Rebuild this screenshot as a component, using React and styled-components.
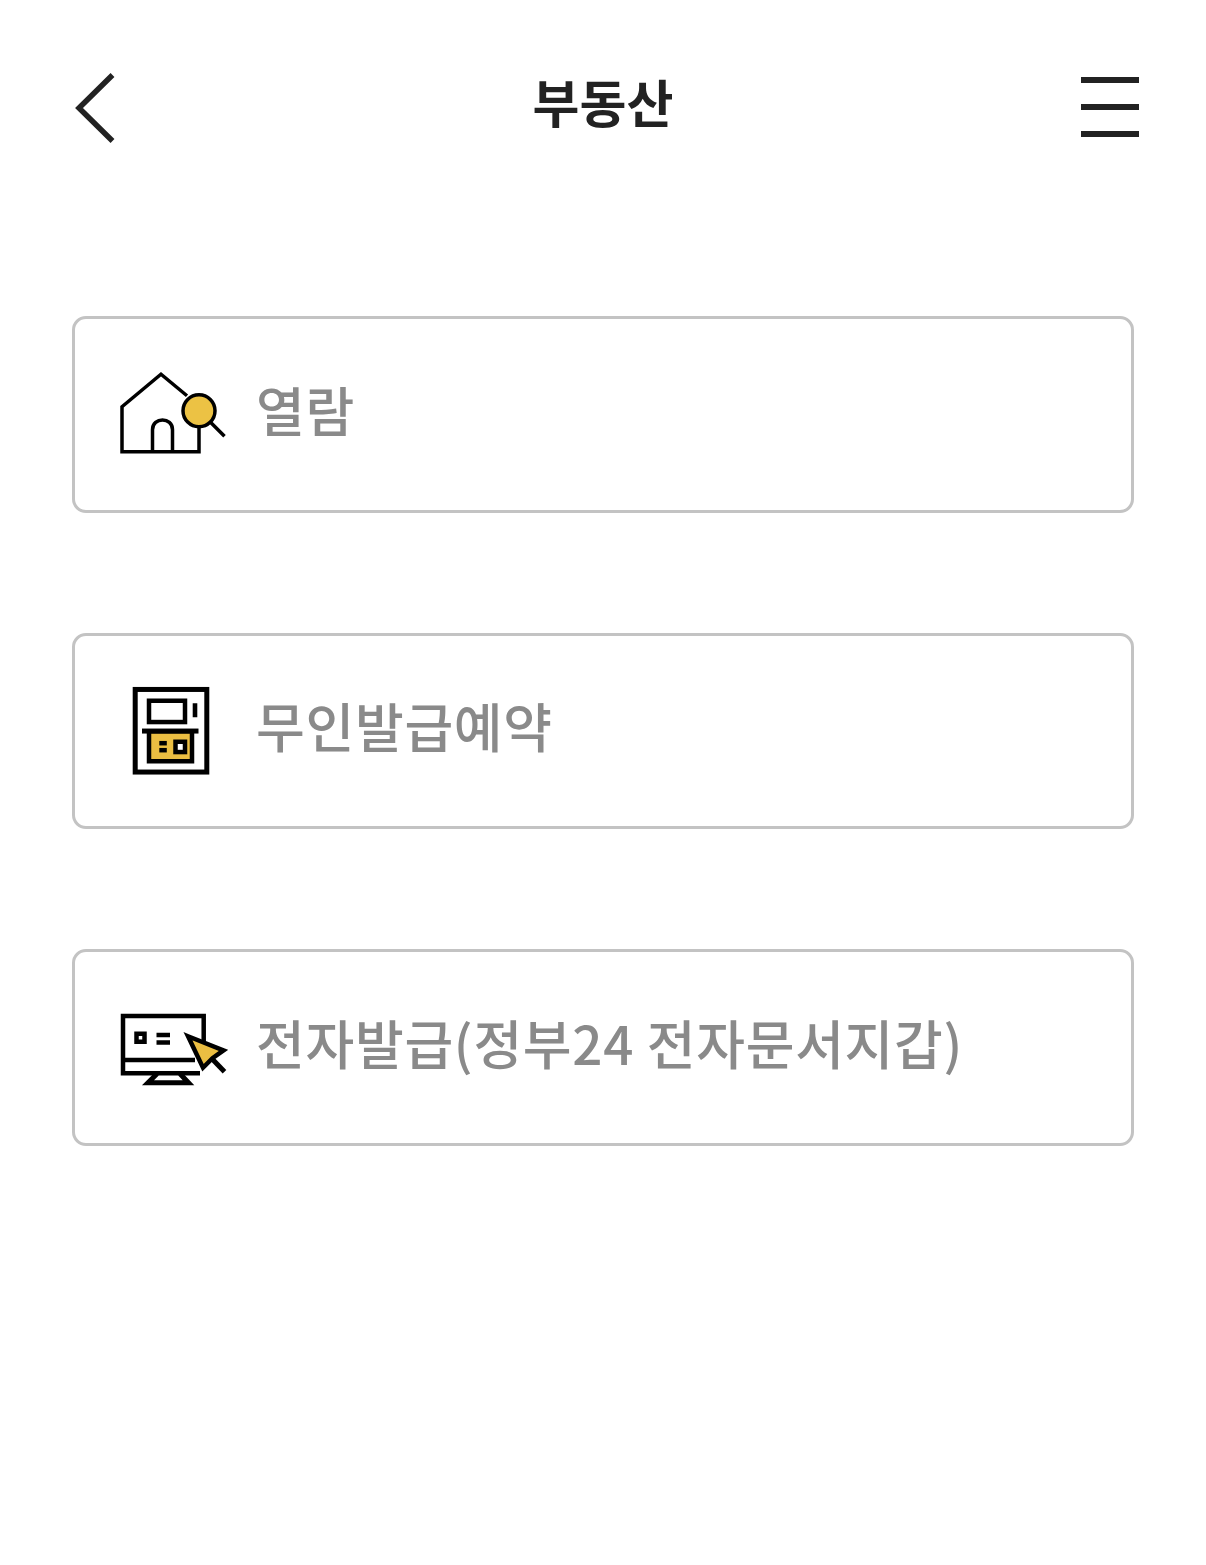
import React from "react";
import styled, { createGlobalStyle } from "styled-components";

const GlobalStyle = createGlobalStyle`
  html, body {
    margin: 0;
    padding: 0;
    background: #ffffff;
  }
  body {
    font-family: "Noto Sans CJK KR", "Noto Sans", sans-serif;
  }
`;

const Page = styled.div`
  width: 1206px;
  height: 1565px;
  overflow: hidden;
  background: #ffffff;
`;

const Header = styled.header`
  height: 214px;
  padding: 73px 72px 0;
  box-sizing: border-box;
  display: grid;
  grid-template-columns: 1fr auto 1fr;
  align-items: start;
`;

const IconButton = styled.button`
  padding: 0;
  border: 0;
  background: none;
  display: block;
  width: ${({ size }) => size}px;
  height: 70px;
  justify-self: ${({ end }) => (end ? "end" : "start")};
  margin-right: ${({ end }) => (end ? "-5px" : "0")};
`;

const Title = styled.h1`
  margin: -7px 0 0;
  font-size: 51px;
  line-height: 70px;
  font-weight: 700;
  letter-spacing: 0;
  color: #222222;
`;

const MenuBars = styled.span`
  display: flex;
  flex-direction: column;
  gap: 21px;
  margin-top: -2px;
`;

const MenuBar = styled.span`
  display: block;
  height: 6px;
  background: #222222;
`;

const Menu = styled.nav`
  padding: 102px 72px 0;
  display: flex;
  flex-direction: column;
  gap: 120px;
`;

const Card = styled.a`
  height: 196.5px;
  box-sizing: border-box;
  border: 3px solid #c3c3c3;
  border-radius: 14px;
  background: #ffffff;
  padding-left: 43px;
  display: flex;
  align-items: center;
  gap: 28px;
`;

const IconSlot = styled.span`
  display: block;
  width: 110px;
  height: 110px;
  flex: none;
`;

const Label = styled.span`
  margin-top: -11px;
  font-size: 53px;
  line-height: 70px;
  font-weight: 500;
  letter-spacing: 0.7px;
  color: #8a8a8a;
`;

const BackIcon = () => (
  <svg width="46" height="70" viewBox="0 0 46 70" fill="none">
    <path d="M40.500 2 L7 35 L40.500 68" stroke="#222" strokeWidth="5.500" />
  </svg>
);

const HouseIcon = () => (
  <svg width="110" height="110" viewBox="118 359.250 110 110" fill="none" stroke="#000" strokeWidth="3.500">
    <path d="M187 396 L161 374.500 L122 407 V452 H199 V425" />
    <path d="M152.500 452 V430 C152.500 417 172.500 417 172.500 430 V452" />
    <path d="M209 421 L224.500 436.500" />
    <circle cx="199" cy="411" r="16" fill="#ecc244" />
  </svg>
);

const KioskIcon = () => (
  <svg width="110" height="110" viewBox="118 675.750 110 110" fill="none" stroke="#000" strokeWidth="4.500">
    <rect x="135.200" y="689.200" width="71.600" height="82.600" strokeWidth="5" />
    <rect x="149" y="700.500" width="36" height="21.300" />
    <rect x="192.700" y="703" width="4.600" height="14" fill="#000" stroke="none" />
    <rect x="149" y="731" width="43" height="30" fill="#ebbe42" />
    <rect x="142" y="728.300" width="56.500" height="5" fill="#000" stroke="none" />
    <rect x="159.300" y="740.700" width="7.500" height="4.500" fill="#000" stroke="none" />
    <rect x="159.300" y="747.700" width="7.500" height="4.500" fill="#000" stroke="none" />
    <rect x="175.500" y="741.500" width="9.500" height="10.300" fill="#fff" />
  </svg>
);

const MonitorIcon = () => (
  <svg width="110" height="110" viewBox="118 992.250 110 110" fill="none" stroke="#000" strokeWidth="4.500">
    <path d="M203.700 1043 V1016.200 H123 V1073.500 H200" />
    <path d="M123 1060.300 H195" />
    <path d="M157 1074 L148 1083 H188.500 L180 1074" strokeWidth="5" />
    <rect x="136.500" y="1034" width="8" height="8" />
    <path d="M156.500 1035.300 H170 M156.500 1042.700 H170" />
    <path d="M211 1058 L224.500 1072" strokeWidth="5" />
    <path d="M188 1036.500 L223.500 1050.700 L212.500 1058.500 L203 1068 Z" fill="#ebbe42" />
  </svg>
);

const items = [
  { label: "열람", Icon: HouseIcon },
  { label: "무인발급예약", Icon: KioskIcon },
  { label: "전자발급(정부24 전자문서지갑)", Icon: MonitorIcon },
];

export default function App() {
  return (
    <Page>
      <GlobalStyle />
      <Header>
        <IconButton size={46}>
          <BackIcon />
        </IconButton>
        <Title>부동산</Title>
        <IconButton size={58} end>
          <MenuBars>
            <MenuBar />
            <MenuBar />
            <MenuBar />
          </MenuBars>
        </IconButton>
      </Header>
      <Menu>
        {items.map(({ label, Icon }) => (
          <Card key={label}>
            <IconSlot>
              <Icon />
            </IconSlot>
            <Label>{label}</Label>
          </Card>
        ))}
      </Menu>
    </Page>
  );
}
